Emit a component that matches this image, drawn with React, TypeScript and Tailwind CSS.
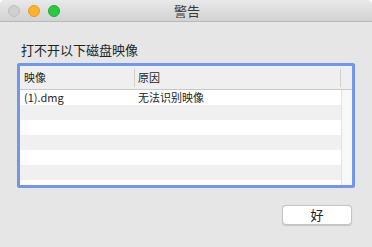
import React from "react";

const font = { fontFamily: '"Noto Sans CJK SC", "Liberation Sans", sans-serif' };

export default function App() {
  const rows = [
    ["(1).dmg", "无法识别映像"],
    ["", ""],
    ["", ""],
    ["", ""],
    ["", ""],
    ["", ""],
  ];
  return (
    <div className="w-[372px] h-[247px] bg-[#e6e6e6] flex flex-col overflow-hidden rounded-t-[5px]" style={font}>
      <div className="h-[22px] shrink-0 relative flex items-center bg-gradient-to-b from-[#e9e9e9] to-[#d2d2d2] border-b border-[#b9b9b9]">
        <div className="flex items-center gap-[8px] pl-[8px]">
          <div className="w-[12px] h-[12px] rounded-full bg-[#d0d0d0] border border-[#bdbdbd]" />
          <div className="w-[12px] h-[12px] rounded-full bg-[#fdb12d] border border-[#e19c27]" />
          <div className="w-[12px] h-[12px] rounded-full bg-[#2bc940] border border-[#23a934]" />
        </div>
        <div className="absolute inset-0 flex items-center justify-center text-[13px] text-[#3a3a3a] leading-none pl-[2px]">警告</div>
      </div>
      <div className="flex-1 flex flex-col px-[17px]">
        <div className="mt-[20px] pl-[4px] text-[13px] leading-[16px] text-[#242424]">打不开以下磁盘映像</div>
        <div className="mt-[5px] h-[125px] w-[338px] rounded-[2px] border-[3px] border-[#7496e6] bg-white flex overflow-hidden">
          <div className="flex-1 flex flex-col">
            <div className="h-[24px] shrink-0 bg-[#efefef] border-b border-[#c8c8c8] flex items-center text-[11px] text-[#262626]">
              <div className="w-[115px] pl-[4px] h-[18px] flex items-center border-r border-[#d0d0d0]">映像</div>
              <div className="flex-1 pl-[3px] h-[18px] flex items-center border-r border-[#d0d0d0]">原因</div>
            </div>
            {rows.map((r, i) => (
              <div key={i} className={`h-[15px] shrink-0 flex items-center text-[11px] text-[#262626] ${i % 2 === 0 ? "bg-white" : "bg-[#eff0ef]"}`}>
                <div className="w-[115px] pl-[4px]">{r[0]}</div>
                <div className="flex-1 pl-[3px]">{r[1]}</div>
              </div>
            ))}
          </div>
          <div className="w-[11px] shrink-0 flex flex-col">
            <div className="h-[24px] bg-[#efefef] border-b border-[#c8c8c8]" />
            <div className="flex-1 bg-[#f8f8f8] border-l border-[#e2e2e2]" />
          </div>
        </div>
        <div className="mt-[17px] flex justify-end pr-[3px]">
          <div className="w-[70px] h-[20px] bg-white rounded-[4px] border border-[#c4c4c4] shadow-[0_0.5px_1px_rgba(0,0,0,0.15)] flex items-center justify-center text-[13px] text-[#222]">好</div>
        </div>
      </div>
    </div>
  );
}
